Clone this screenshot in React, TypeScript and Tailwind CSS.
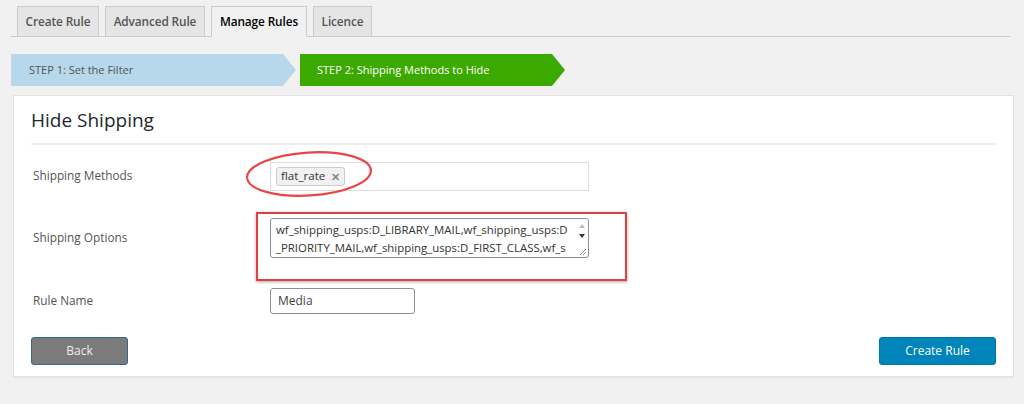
import React from "react";

const font = { fontFamily: '"Open Sans", "Noto Sans", sans-serif' };

function Tab({ label, active, w }: { label: string; active?: boolean; w: string }) {
  return (
    <div
      className={
        w +
        " h-[31px] -mb-px flex items-center justify-center border border-[#ccc] text-[11.8px] font-semibold tracking-[-0.1px] " +
        (active
          ? "bg-[#f1f1f1] border-b-[#f1f1f1] text-[#000]"
          : "bg-[#e5e5e5] text-[#555]")
      }
    >
      {label}
    </div>
  );
}

export default function App() {
  return (
    <div className="w-[1024px] h-[404px] bg-[#f1f1f1] overflow-hidden" style={font}>
      {/* Tabs */}
      <div className="ml-[11px] mr-[14px] pt-[6px] pl-[6px] flex gap-[6px] border-b border-[#ccc]">
        <Tab label="Create Rule" w="w-[82px]" />
        <Tab label="Advanced Rule" w="w-[100px]" />
        <Tab label="Manage Rules" active w="w-[96px]" />
        <Tab label="Licence" w="w-[59px]" />
      </div>

      {/* Steps */}
      <div className="ml-[11px] mt-[17px] flex items-center h-[32px]">
        <div className="relative w-[272px] h-[32px] bg-[#b6d8ea] flex items-center pl-[18px] text-[11px] text-[#555]">
          STEP 1: Set the Filter
          <div className="absolute right-[-13px] top-0 w-0 h-0 border-y-[16px] border-y-transparent border-l-[13px] border-l-[#b6d8ea]" />
        </div>
        <div className="relative ml-[17px] w-[252px] h-[32px] bg-[#3ca900] flex items-center pl-[17px] text-[11px] text-white">
          STEP 2: Shipping Methods to Hide
          <div className="absolute right-[-13px] top-0 w-0 h-0 border-y-[16px] border-y-transparent border-l-[13px] border-l-[#3ca900]" />
        </div>
      </div>

      {/* Panel */}
      <div className="relative ml-[13px] mt-[9px] w-[1001px] h-[282px] bg-white border border-[#e1e1e1] shadow-[0_1px_1px_rgba(0,0,0,0.04)] px-[17px]">
        <div className="pt-[10px] pb-[9px] text-[19px] text-[#23282d] leading-[28px] border-b-2 border-[#eee]">
          Hide Shipping
        </div>

        {/* Shipping Methods */}
        <div className="flex items-center h-[62px] text-[11.8px] text-[#555]">
          <div className="w-[239px] pl-[2px]">Shipping Methods</div>
          <div className="relative w-[319px] h-[29px] border border-[#ddd] bg-white flex items-center pl-[5px]">
            <div className="h-[19px] flex items-center gap-[6px] px-[4px] bg-[#f1f1f1] border border-[#ccc] rounded-[3px] text-[11.6px] text-[#333]">
              flat_rate
              <span className="text-[#888] text-[11px] font-bold leading-none">✕</span>
            </div>
            <svg className="absolute left-[-26px] top-[-14px] pointer-events-none" width="130" height="50" viewBox="0 0 130 50">
              <ellipse cx="64" cy="25" rx="62" ry="21.5" fill="none" stroke="#e84545" strokeWidth="2.2" transform="rotate(-3.5 64 25)" />
            </svg>
          </div>
        </div>

        {/* Shipping Options */}
        <div className="flex items-center h-[62px] text-[11.8px] text-[#555]">
          <div className="w-[239px] pl-[2px]">Shipping Options</div>
          <div className="relative w-[319px] h-[40px] border border-[#8c8f94] rounded-[3px] bg-white flex">
            <div className="flex-1 overflow-hidden whitespace-nowrap pl-[5px] pt-[2px] text-[11.4px] leading-[18px] text-[#333]">
              <div>wf_shipping_usps:D_LIBRARY_MAIL,wf_shipping_usps:D</div>
              <div>_PRIORITY_MAIL,wf_shipping_usps:D_FIRST_CLASS,wf_s</div>
            </div>
            <div className="w-[13px] shrink-0 flex flex-col items-center pt-[5px] gap-[6px]">
              <div className="w-0 h-0 border-x-[3.5px] border-x-transparent border-b-[4px] border-b-[#bbb]" />
              <div className="w-0 h-0 border-x-[3.5px] border-x-transparent border-t-[4px] border-t-[#333]" />
            </div>
            <svg className="absolute right-[1px] bottom-[1px]" width="8" height="8" viewBox="0 0 8 8">
              <path d="M7 1 L1 7 M7 4 L4 7" stroke="#999" strokeWidth="1" />
            </svg>
            <div className="absolute left-[-15px] top-[-7px] w-[371px] h-[69px] border-[2.5px] border-[#e53e3e] shadow-[0_1px_3px_rgba(0,0,0,0.35)] pointer-events-none" />
          </div>
        </div>

        {/* Rule Name */}
        <div className="flex items-center h-[62px] text-[11.8px] text-[#555] mt-[1px]">
          <div className="w-[239px] pl-[2px]">Rule Name</div>
          <div className="w-[145px] h-[26px] border border-[#8c8f94] rounded-[3px] bg-white flex items-center pl-[7px] text-[12px] text-[#444]">
            Media
          </div>
        </div>

        {/* Buttons */}
        <div className="flex justify-between items-center mt-[5px]">
          <button className="w-[97px] h-[28px] bg-[#7b7b7b] border border-[#2e6a8a] rounded-[3px] text-[#eee] text-[12px]">
            Back
          </button>
          <button className="w-[117px] h-[28px] bg-[#0085ba] border border-[#0073aa] rounded-[3px] text-white text-[12px]">
            Create Rule
          </button>
        </div>
      </div>
    </div>
  );
}
